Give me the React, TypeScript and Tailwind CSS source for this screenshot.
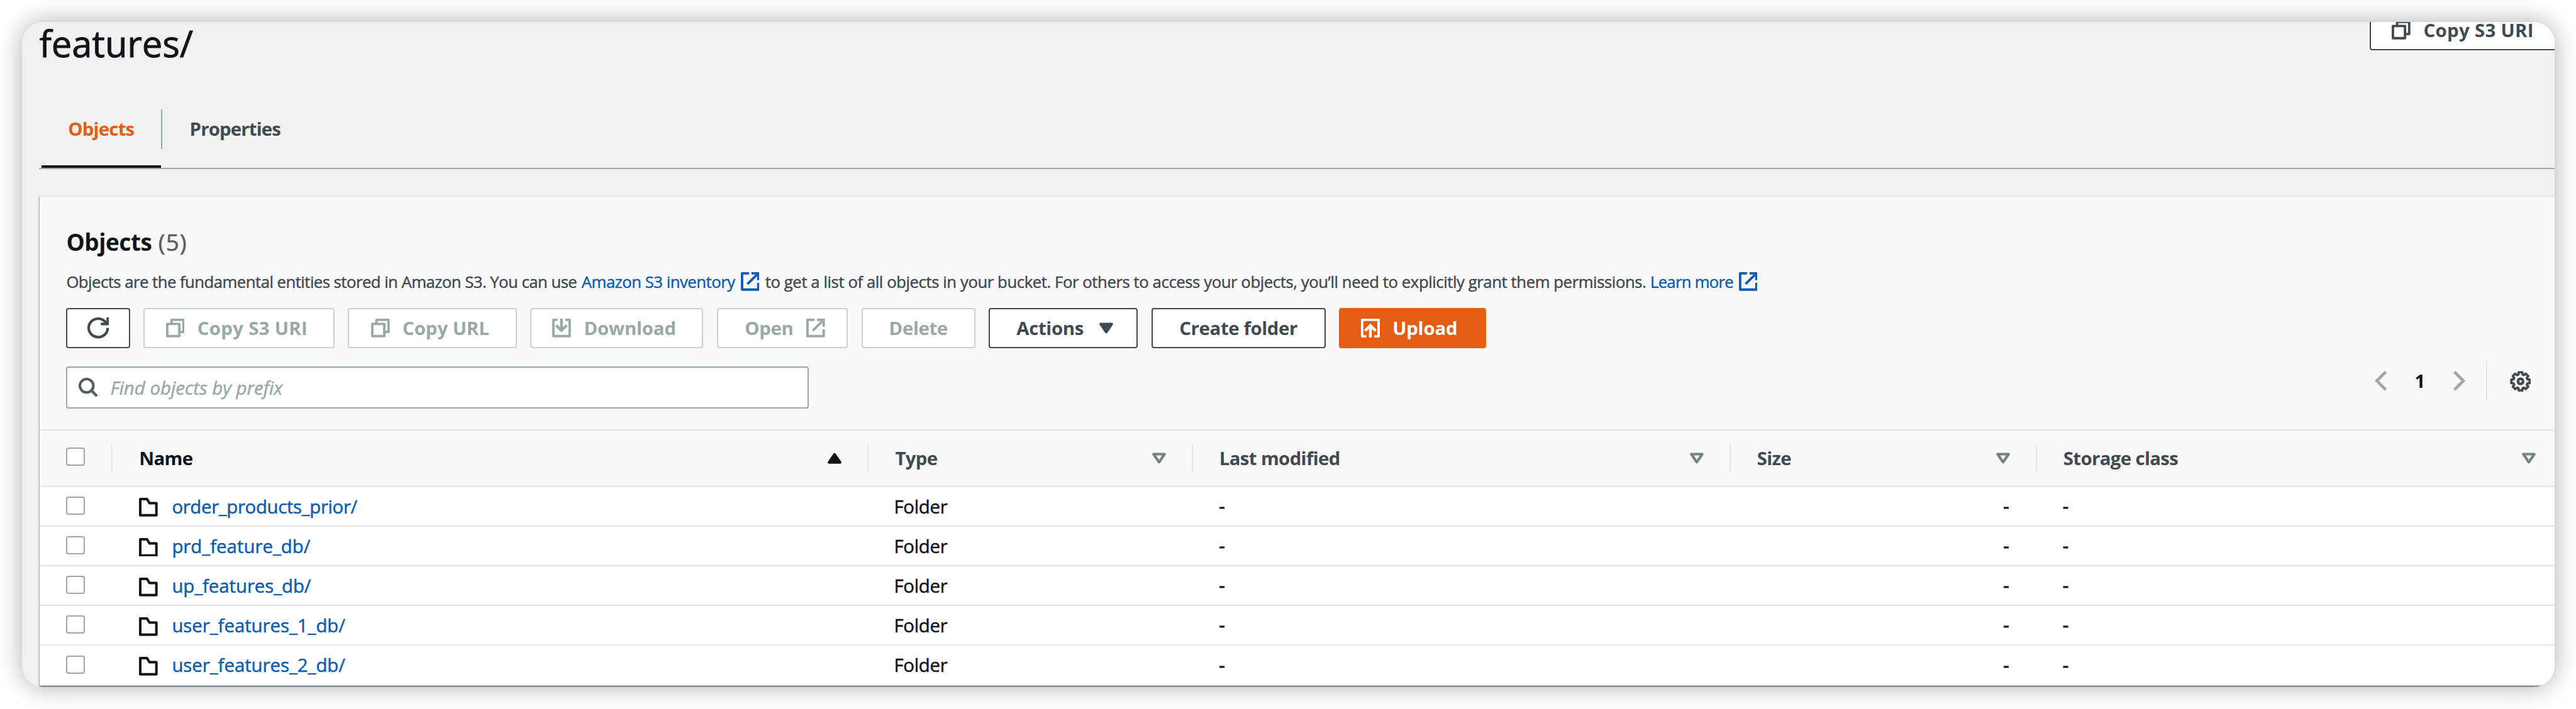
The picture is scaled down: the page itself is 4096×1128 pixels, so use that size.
import type { ReactNode } from "react";

type IconProps = { className?: string };

function CopyIcon({ className = "" }: IconProps) {
  return (
    <svg viewBox="0 0 31 31" className={`size-[29.7px] shrink-0 ${className}`} fill="none" stroke="currentColor" strokeWidth="4" strokeLinejoin="round">
      <path d="M2 8.8H22V29H2Z" />
      <path d="M9 9V2H29V22H22" />
    </svg>
  );
}

function ExternalIcon({ className = "" }: IconProps) {
  return (
    <svg viewBox="0 0 31 31" className={`size-[29.7px] shrink-0 ${className}`} fill="none" stroke="currentColor" strokeWidth="4" strokeLinejoin="round">
      <path d="M13.5 2H2V29H29V17.8" />
      <path d="M17.7 2H29V13.2" strokeLinejoin="miter" />
      <path d="M28.5 2.5L11 19.8" />
    </svg>
  );
}

function DownloadIcon() {
  return (
    <svg viewBox="0 0 31 31" className="size-[29.7px] shrink-0" fill="none" stroke="currentColor" strokeWidth="4" strokeLinejoin="round">
      <path d="M9 2H2V29H29V2H22" />
      <path d="M15.4 0V19" strokeWidth="4.6" />
      <path d="M6.6 11L15.4 19.7L24.2 11" strokeWidth="4.6" strokeLinejoin="miter" />
    </svg>
  );
}

function UploadIcon() {
  return (
    <svg viewBox="0 0 31 31" className="size-[30px] shrink-0" fill="none" stroke="currentColor" strokeWidth="4" strokeLinejoin="round">
      <path d="M9 29H2V2H29V29H22" />
      <path d="M15.5 31V12" strokeWidth="4.6" />
      <path d="M6.7 20L15.5 11.3L24.3 20" strokeWidth="4.6" strokeLinejoin="miter" />
    </svg>
  );
}

function RefreshIcon() {
  return (
    <svg viewBox="0 0 36 35" className="h-[33.5px] w-[34.5px] shrink-0" fill="none" stroke="currentColor" strokeWidth="4.4">
      <path d="M33.7 17.5A15.8 15.3 0 1 1 28.4 6L33 10.5" />
      <path d="M22.3 10.8H33.8V0" />
    </svg>
  );
}

function SearchIcon() {
  return (
    <svg viewBox="0 0 32 32" className="size-[30.6px] shrink-0 text-[#545d64]" fill="none" stroke="currentColor" strokeWidth="4.4">
      <circle cx="13.3" cy="13.3" r="11.2" />
      <path d="M21 21L30.5 30.5" />
    </svg>
  );
}

function FolderIcon() {
  return (
    <svg viewBox="0 0 31 31" className="relative top-[2px] size-[29.7px] shrink-0 text-[#121419]" fill="none" stroke="currentColor" strokeWidth="4.2" strokeLinejoin="round">
      <path d="M2.1 2.1H13.3L17.4 8.8H28.9V28.9H2.1Z" />
    </svg>
  );
}

function ChevronIcon({ right = false }: { right?: boolean }) {
  return (
    <svg viewBox="0 0 20 33" className="h-[31.6px] w-[19.2px] shrink-0 text-[#9aa8a8]" fill="none" stroke="currentColor" strokeWidth="4.8">
      <path d={right ? "M1.7 1.6L16.6 16.5L1.7 31.4" : "M18.3 1.6L3.4 16.5L18.3 31.4"} />
    </svg>
  );
}

const gearPoints = Array.from({ length: 8 }, (_, i) => {
  const base = (i * Math.PI) / 4;
  return [
    [-0.3, 12],
    [-0.18, 15.4],
    [0.18, 15.4],
    [0.3, 12],
  ].map(([offset, radius]) => {
    const a = base + offset;
    return `${(17.5 + radius * Math.cos(a)).toFixed(2)},${(17.5 + radius * Math.sin(a)).toFixed(2)}`;
  });
})
  .flat()
  .join(" ");

function GearIcon() {
  return (
    <svg viewBox="0 0 35 35" className="size-[33.5px] shrink-0 text-[#414951]" fill="none" stroke="currentColor" strokeWidth="3.9">
      <polygon points={gearPoints} />
      <circle cx="17.5" cy="17.5" r="4.3" strokeWidth="4.4" />
    </svg>
  );
}

function Caret({ up = false, hollow = false, className = "" }: IconProps & { up?: boolean; hollow?: boolean }) {
  return (
    <svg
      viewBox="0 0 23 19"
      className={`h-[18.2px] w-[22px] shrink-0 ${up ? "rotate-180" : ""} ${className}`}
      fill={hollow ? "none" : "currentColor"}
      stroke="currentColor"
      strokeWidth="4.4"
      strokeLinejoin="round"
    >
      <path d="M2.4 2.6H20.6L11.5 16Z" />
    </svg>
  );
}

function Button({ children, className = "", disabled = false }: { children: ReactNode; className?: string; disabled?: boolean }) {
  return (
    <button
      className={`flex h-[63.2px] shrink-0 items-center rounded-[4px] border-2 bg-white text-[29.4px] font-bold whitespace-nowrap ${
        disabled ? "border-[#c9d2cf] text-[#9aa8a8]" : "border-[#414951] text-[#414951]"
      } ${className}`}
    >
      {children}
    </button>
  );
}

function Checkbox({ className = "" }: IconProps) {
  return <div className={`relative h-[29px] w-[30px] shrink-0 rounded-[4px] border-2 border-[#9aa8a8] bg-white ${className}`} />;
}

function HeaderCell({ label, className, children }: { label: string; className: string; children: ReactNode }) {
  return (
    <div className={`flex h-[44px] shrink-0 items-center justify-between pr-[41px] pl-[42px] ${className}`}>
      <span className="tracking-[-0.022em]">{label}</span>
      {children}
    </div>
  );
}

function Divider() {
  return <div className="h-[44px] w-[2px] shrink-0 bg-[#e3e8e7]" />;
}

const rows = [
  { name: "order_products_prior/", tracking: "tracking-[-0.012em]" },
  { name: "prd_feature_db/", tracking: "tracking-[0em]" },
  { name: "up_features_db/", tracking: "tracking-[-0.0025em]" },
  { name: "user_features_1_db/", tracking: "tracking-[-0.0014em]" },
  { name: "user_features_2_db/", tracking: "tracking-[-0.0014em]" },
];

export default function App() {
  return (
    <div className="h-[1128px] w-[4096px] overflow-hidden bg-white pt-[34.5px] pl-[34.5px] font-['Open_Sans','Noto_Sans',sans-serif] text-[#121419]">
      <div className="h-[1058.7px] w-[4027px] rounded-[34px] shadow-[0_0_38px_rgba(0,0,0,0.33)]">
        <div className="flex h-full w-full flex-col overflow-hidden rounded-[34px] bg-[#eff1f0]">
          <div className="flex h-[139.8px] shrink-0 justify-between pl-[28px]">
            <h1 className="text-[58px] leading-[67px] tracking-[-0.0026em] [-webkit-text-stroke:0.9px]">features/</h1>
            <Button className="-mt-[18.2px] -mr-[44px] w-[338px] pl-[33.8px]">
              <CopyIcon />
              <span className="ml-[20.5px] tracking-[0.011em]">Copy S3 URI</span>
            </Button>
          </div>

          <div className="ml-[27px] flex h-[94.9px] shrink-0 items-stretch border-b-2 border-[#9aa8a8] pl-[4px] text-[29.4px] leading-[63.2px] font-bold">
            <div className="flex w-[190.6px] flex-col items-center justify-between">
              <span className="tracking-[-0.027em] text-[#e45d12]">Objects</span>
              <div className="h-[4px] w-full bg-[#121419]" />
            </div>
            <div className="h-[63.2px] w-[2px] bg-[#9aa8a8]" />
            <span className="pl-[43.5px] tracking-[-0.029em] text-[#414951]">Properties</span>
          </div>

          <div className="mt-[42.1px] ml-[28.8px] shrink-0 border-t-2 border-[#e3e8e7] bg-[#f8f8f8] shadow-[0_2px_2px_rgba(0,28,36,0.3),2px_2px_2px_rgba(0,28,36,0.15),-1px_2px_2px_rgba(0,28,36,0.3)]">
            <div className="pt-[46px] pb-[32.6px] pl-[42.1px]">
              <h2 className="text-[36.8px] leading-[52px] font-bold tracking-[-0.01em]">
                Objects <span className="ml-[1px] font-normal tracking-[0.03em] text-[#545d64] [-webkit-text-stroke:0.5px]">(5)</span>
              </h2>

              <p className="mt-[18.6px] flex h-[36px] items-center text-[25.75px] leading-[36px] whitespace-nowrap text-[#414951] [-webkit-text-stroke:0.45px]">
                <span className="tracking-[-0.0212em]">Objects are the fundamental entities stored in Amazon S3. You can use</span>
                <a className="ml-[7.5px] tracking-[-0.0198em] text-[#0d5cae]">Amazon S3 inventory</a>
                <ExternalIcon className="ml-[9px] text-[#0d5cae]" />
                <span className="ml-[9.5px] tracking-[-0.0172em]">
                  to get a list of all objects in your bucket. For others to access your objects, you’ll need to explicitly grant them permissions.
                </span>
                <a className="ml-[6.5px] tracking-[-0.029em] text-[#0d5cae]">Learn more</a>
                <ExternalIcon className="ml-[8.5px] text-[#0d5cae]" />
              </p>

              <div className="mt-[24.6px] flex gap-[21.25px]">
                <Button className="w-[101.5px] justify-center">
                  <RefreshIcon />
                </Button>
                <Button disabled className="w-[304.1px] pl-[33.4px]">
                  <CopyIcon />
                  <span className="ml-[20.5px] tracking-[0.011em]">Copy S3 URI</span>
                </Button>
                <Button disabled className="w-[268.2px] pl-[34.4px]">
                  <CopyIcon />
                  <span className="ml-[20.5px] tracking-[-0.002em]">Copy URL</span>
                </Button>
                <Button disabled className="w-[275.5px] pl-[33.4px]">
                  <DownloadIcon />
                  <span className="ml-[20.5px] tracking-[-0.007em]">Download</span>
                </Button>
                <Button disabled className="w-[208.8px] pl-[42.6px]">
                  <span className="tracking-[-0.013em]">Open</span>
                  <ExternalIcon className="ml-[21px]" />
                </Button>
                <Button disabled className="w-[181px] justify-center">
                  <span className="tracking-[-0.013em]">Delete</span>
                </Button>
                <Button className="w-[237.5px] pl-[42.4px]">
                  <span className="tracking-[-0.013em]">Actions</span>
                  <Caret className="ml-[25px]" />
                </Button>
                <Button className="w-[276.8px] justify-center">
                  <span className="tracking-[-0.0135em]">Create folder</span>
                </Button>
                <Button className="w-[234.7px] border-[#e45d12]! bg-[#e45d12]! pl-[33.4px] text-white!">
                  <UploadIcon />
                  <span className="ml-[20px] tracking-[-0.006em]">Upload</span>
                </Button>
              </div>

              <div className="mt-[29.6px] flex items-start justify-between">
                <div className="flex h-[67px] w-[1181px] items-center rounded-[4px] border-2 border-[#9aa8a8] bg-white pl-[17.4px]">
                  <SearchIcon />
                  <span className="ml-[20px] text-[29.4px] text-[#9aa8a8] italic [-webkit-text-stroke:0.5px]">Find objects by prefix</span>
                </div>
                <div className="-mt-[8.6px] flex h-[63.2px] items-center pr-[37.4px]">
                  <ChevronIcon />
                  <span className="mr-[48px] ml-[44px] w-[13px] text-center text-[29.4px] font-bold">1</span>
                  <ChevronIcon right />
                  <div className="mr-[35.4px] ml-[33.5px] h-full w-[2px] bg-[#e3e8e7]" />
                  <GearIcon />
                </div>
              </div>
            </div>

            <div className="flex h-[91.9px] items-center border-y-2 border-[#e3e8e7] text-[29.4px] font-bold text-[#414951]">
              <div className="flex w-[113.9px] shrink-0 pl-[42.1px]">
                <Checkbox className="-top-[2.4px]" />
              </div>
              <Divider />
              <HeaderCell label="Name" className="w-[1200.2px] text-[#121419]">
                <Caret up />
              </HeaderCell>
              <Divider />
              <HeaderCell label="Type" className="w-[513.4px]">
                <Caret hollow className="text-[#748280]" />
              </HeaderCell>
              <Divider />
              <HeaderCell label="Last modified" className="w-[852.9px]">
                <Caret hollow className="text-[#748280]" />
              </HeaderCell>
              <Divider />
              <HeaderCell label="Size" className="w-[485.1px]">
                <Caret hollow className="text-[#748280]" />
              </HeaderCell>
              <Divider />
              <HeaderCell label="Storage class" className="w-[834px]">
                <Caret hollow className="text-[#748280]" />
              </HeaderCell>
            </div>

            {rows.map((row) => (
              <div key={row.name} className="flex h-[63.2px] items-center border-b-2 border-[#e3e8e7] bg-white text-[29.4px] leading-[61px]">
                <div className="w-[115.9px] shrink-0 pl-[42.1px]">
                  <Checkbox className="-top-[1px]" />
                </div>
                <div className="flex w-[1202.2px] shrink-0 items-center pl-[42px]">
                  <FolderIcon />
                  <a className={`ml-[22.5px] pt-[1.6px] text-[#0d5cae] [-webkit-text-stroke:0.5px] ${row.tracking}`}>{row.name}</a>
                </div>
                <div className="w-[515.4px] shrink-0 pt-[1.6px] pl-[40px] tracking-[-0.01em] [-webkit-text-stroke:0.5px]">Folder</div>
                <div className="w-[854.9px] shrink-0 pl-[41.5px] [-webkit-text-stroke:0.9px]">-</div>
                <div className="w-[487.1px] shrink-0 pr-[44px] text-right [-webkit-text-stroke:0.9px]">-</div>
                <div className="pl-[41px] [-webkit-text-stroke:0.9px]">-</div>
              </div>
            ))}
          </div>
        </div>
      </div>
    </div>
  );
}
